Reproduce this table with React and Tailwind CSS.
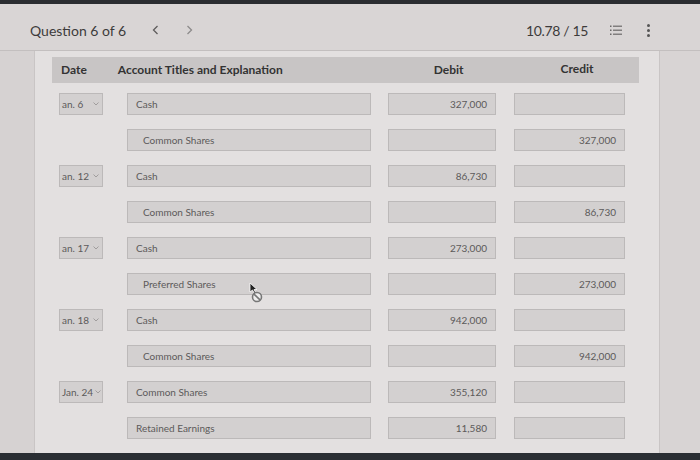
import React from "react";

// journal rows, as shown on screen (dates are clipped inside the select)
const rows = [
  { date: "an. 6", account: "Cash", debit: "327,000", credit: "" },
  { date: "", account: "Common Shares", indent: true, debit: "", credit: "327,000" },
  { date: "an. 12", account: "Cash", debit: "86,730", credit: "" },
  { date: "", account: "Common Shares", indent: true, debit: "", credit: "86,730" },
  { date: "an. 17", account: "Cash", debit: "273,000", credit: "" },
  { date: "", account: "Preferred Shares", indent: true, debit: "", credit: "273,000" },
  { date: "an. 18", account: "Cash", debit: "942,000", credit: "" },
  { date: "", account: "Common Shares", indent: true, debit: "", credit: "942,000" },
  { date: "Jan. 24", account: "Common Shares", debit: "355,120", credit: "" },
  { date: "", account: "Retained Earnings", debit: "11,580", credit: "" },
  { date: "", account: "", debit: "", credit: "" },
];

const box = "h-[22px] bg-[#d3d0d0] border border-[#bcb9b9] flex items-center text-[10px] text-[#5c5a5a]";

function ListIcon() {
  return (
    <svg width="12" height="11" viewBox="0 0 12 11" fill="#6b6969">
      <rect x="0" y="0.5" width="1.5" height="1.5" />
      <rect x="0" y="4.5" width="1.5" height="1.5" />
      <rect x="0" y="8.5" width="1.5" height="1.5" />
      <rect x="3" y="0.6" width="9" height="1.2" />
      <rect x="3" y="4.6" width="9" height="1.2" />
      <rect x="3" y="8.6" width="9" height="1.2" />
    </svg>
  );
}

function Chevron({ dir, color }) {
  return (
    <svg width="7" height="10" viewBox="0 0 7 10">
      <path d={dir === "left" ? "M5.5 1 L1.5 5 L5.5 9" : "M1.5 1 L5.5 5 L1.5 9"} fill="none" stroke={color} strokeWidth="1.3" />
    </svg>
  );
}

function Cursor() {
  return (
    <svg width="18" height="24" viewBox="0 0 18 24" className="absolute left-[249px] top-[282px]">
      <path d="M1 1 L1 10 L3.5 8 L5.5 11.5 L6.8 10.8 L5 7.5 L8 7.5 Z" fill="#222" stroke="#fff" strokeWidth="0.8" />
      <circle cx="8" cy="15" r="4.5" fill="#eee" stroke="#777" strokeWidth="1.6" />
      <path d="M5 12.2 L11 17.8" stroke="#777" strokeWidth="1.6" />
    </svg>
  );
}

export default function App() {
  return (
    <div className="relative w-[700px] h-[460px] overflow-hidden bg-[#dcd8d8] flex flex-col" style={{ fontFamily: "Lato, 'Open Sans', sans-serif" }}>
      <div className="h-[4px] bg-[#2b2d31]" />

      {/* top bar */}
      <header className="h-[47px] bg-[#d9d5d5] border-b border-[#c3bfbf] flex items-center pt-[6px] pl-[30px] pr-[50px] text-[#3d3b3b]">
        <span className="text-[14px]">Question 6 of 6</span>
        <span className="ml-[26px]"><Chevron dir="left" color="#5f5d5d" /></span>
        <span className="ml-[27px]"><Chevron dir="right" color="#8d8b8b" /></span>
        <span className="ml-auto text-[14px] tracking-tight">10.78 / 15</span>
        <span className="ml-[22px]"><ListIcon /></span>
        <span className="ml-[25px] flex flex-col gap-[2px]">
          <span className="w-[3px] h-[3px] rounded-full bg-[#555]" />
          <span className="w-[3px] h-[3px] rounded-full bg-[#555]" />
          <span className="w-[3px] h-[3px] rounded-full bg-[#555]" />
        </span>
      </header>

      <div className="flex flex-1 min-h-0">
        <div className="w-[34px] bg-[#d6d2d2]" />
        <main className="w-[626px] bg-[#e3e0e0] border-x border-[#c9c5c5] pl-[17px] pt-[6px]">
          <div className="w-[587px] h-[26px] bg-[#c8c5c5] flex items-center text-[12px] font-bold text-[#333]">
            <span className="ml-[9px]">Date</span>
            <span className="ml-[31px]">Account Titles and Explanation</span>
            <span className="ml-[151px]">Debit</span>
            <span className="ml-[97px] -mt-[3px]">Credit</span>
          </div>

          <div className="mt-[10px] flex flex-col gap-[14px]">
            {rows.map((r, i) => (
              <div key={i} className="flex items-center">
                {r.date ? (
                  <div className={`${box} ml-[7px] w-[44px] pl-[2px] pr-[3px] justify-between whitespace-nowrap overflow-hidden`}>
                    <span>{r.date}</span>
                    <svg width="6" height="4" viewBox="0 0 6 4" className="shrink-0 ml-[2px]"><path d="M0.5 0.5 L3 3 L5.5 0.5" fill="none" stroke="#9a9797" strokeWidth="0.9" /></svg>
                  </div>
                ) : (
                  <div className="ml-[7px] w-[44px]" />
                )}
                <div className={`${box} ml-[24px] w-[244px] ${r.indent ? "pl-[15px]" : "pl-[8px]"}`}>{r.account}</div>
                <div className={`${box} ml-[17px] w-[108px] justify-end pr-[8px]`}>{r.debit}</div>
                <div className={`${box} ml-[18px] w-[111px] justify-end pr-[8px]`}>{r.credit}</div>
              </div>
            ))}
          </div>
        </main>
        <div className="flex-1 bg-[#d8d4d4]" />
      </div>

      <div className="absolute left-0 right-0 bottom-0 h-[7px] bg-[#2a2e33]" />
      <Cursor />
    </div>
  );
}
